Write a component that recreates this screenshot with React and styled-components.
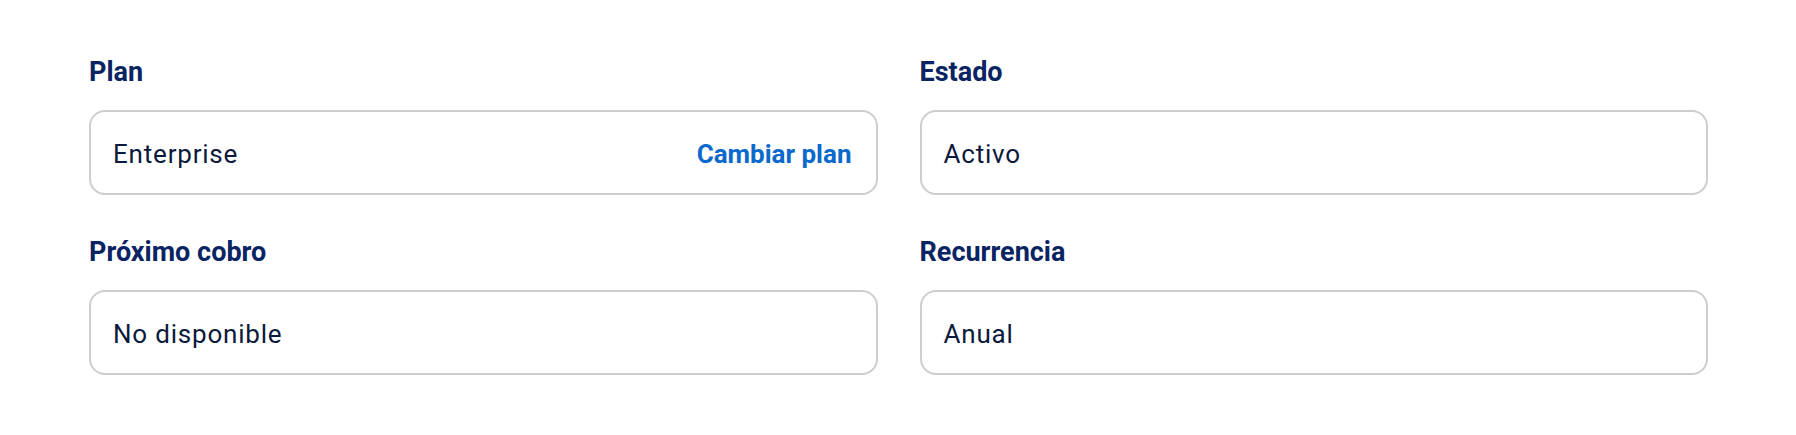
import React from 'react'
import styled, { createGlobalStyle } from 'styled-components'

const GlobalStyle = createGlobalStyle`
body {
    margin: 0;
    background: #ffffff;
    font-family: Roboto, "Liberation Sans", Arial, sans-serif;
}
`

const Page = styled.div`
padding: 56px 88px 60px 89px;
`

const Grid = styled.div`
display: grid;
grid-template-columns: 1fr 1fr;
column-gap: 42px;
row-gap: 41px;
`

const Field = styled.div`
display: flex;
flex-direction: column;
`

const Label = styled.div`
font-size: 27px;
line-height: 32px;
font-weight: 700;
color: #0a2463;
margin-bottom: 22px;
`

const ValueBox = styled.div`
box-sizing: border-box;
height: 85px;
display: flex;
align-items: center;
justify-content: space-between;
padding: 3px 24px 0 22px;
border: 2px solid #cdcdcd;
border-radius: 16px;
background: #fff;
`

const Value = styled.span`
font-size: 26px;
line-height: 30px;
letter-spacing: 0.8px;
color: #0b1a3c;
`

const Action = styled.a`
font-size: 26px;
line-height: 30px;
font-weight: 700;
color: #0b68cc;
text-decoration: none;
cursor: pointer;
`

const fields = [
    { label: 'Plan', value: 'Enterprise', action: 'Cambiar plan' },
    { label: 'Estado', value: 'Activo' },
    { label: 'Próximo cobro', value: 'No disponible' },
    { label: 'Recurrencia', value: 'Anual' },
]

export default function App() {
    return (
        <>
            <GlobalStyle />
            <Page>
                <Grid>
                    {fields.map(f => (
                        <Field key={f.label}>
                            <Label>{f.label}</Label>
                            <ValueBox>
                                <Value>{f.value}</Value>
                                {f.action && <Action>{f.action}</Action>}
                            </ValueBox>
                        </Field>
                    ))}
                </Grid>
            </Page>
        </>
    )
}
